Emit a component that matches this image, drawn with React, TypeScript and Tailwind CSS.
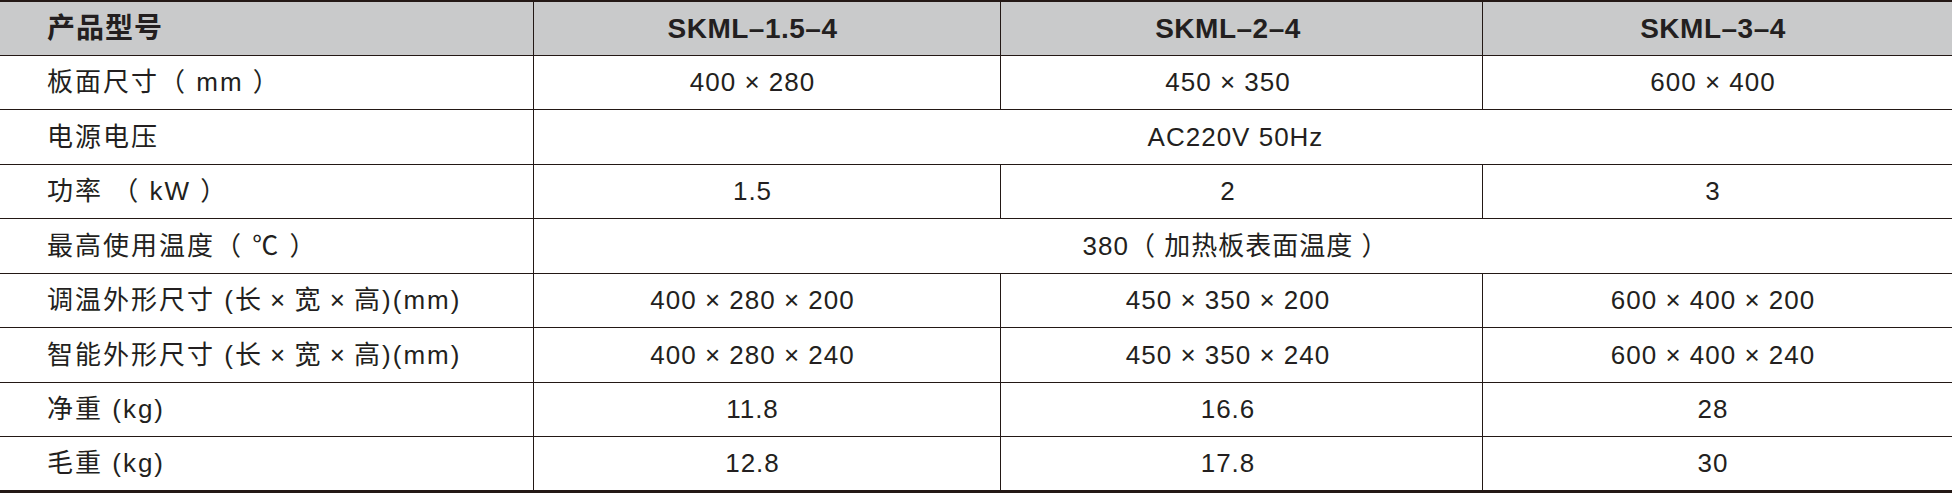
import React from 'react'

type Row = {
  label: string
  values?: string[]
  span?: string
}

const rows: Row[] = [
  { label: '板面尺寸（ mm ）', values: ['400 × 280', '450 × 350', '600 × 400'] },
  { label: '电源电压', span: 'AC220V 50Hz' },
  { label: '功率 （ kW ）', values: ['1.5', '2', '3'] },
  { label: '最高使用温度（ ℃ ）', span: '380（ 加热板表面温度 ）' },
  {
    label: '调温外形尺寸 (长\u2009×\u2009宽\u2009×\u2009高)(mm)',
    values: ['400 × 280 × 200', '450 × 350 × 200', '600 × 400 × 200'],
  },
  {
    label: '智能外形尺寸 (长\u2009×\u2009宽\u2009×\u2009高)(mm)',
    values: ['400 × 280 × 240', '450 × 350 × 240', '600 × 400 × 240'],
  },
  { label: '净重 (kg)', values: ['11.8', '16.6', '28'] },
  { label: '毛重 (kg)', values: ['12.8', '17.8', '30'] },
]

const models = ['SKML–1.5–4', 'SKML–2–4', 'SKML–3–4']

// pr per column so the text sits where the print put it
const colPad = ['pr-[29px]', 'pr-[27px]', 'pr-[9px]']

export default function App() {
  return (
    <div
      className="w-[1952px] h-[493px] bg-white text-[#231f20] overflow-hidden"
      style={{ fontFamily: '"Liberation Sans", "Noto Sans CJK SC", sans-serif' }}
    >
      <div className="border-t-2 border-b-[3px] border-[#231815] grid grid-cols-[534px_467px_482px_1fr]">
        {/* header */}
        <div className="h-[54px] border-b border-r border-[#231815] bg-[#c9cacb] flex items-center pl-[47px] text-[28px] font-bold tracking-[1px]">
          产品型号
        </div>
        {models.map((m, i) => (
          <div
            key={m}
            className={`h-[54px] border-b border-[#231815] bg-[#c9cacb] flex items-center justify-center text-[28px] font-bold tracking-[0.5px] ${
              i < 2 ? 'border-r' : ''
            } ${colPad[i]}`}
          >
            {m}
          </div>
        ))}

        {rows.map((r, idx) => {
          const last = idx === rows.length - 1
          const h = last ? 'h-[53px]' : idx % 2 === 0 ? 'h-[54px]' : 'h-[55px]'
          const bb = last ? '' : 'border-b'
          return (
            <React.Fragment key={r.label}>
              <div
                className={`${h} ${bb} border-r border-[#231815] flex items-center pl-[47px] text-[26px] tracking-[2px]`}
              >
                {r.label}
              </div>
              {r.span ? (
                <div
                  className={`${h} ${bb} col-span-3 border-[#231815] flex items-center justify-center text-[26px] tracking-[1px] pr-[15px]`}
                >
                  {r.span}
                </div>
              ) : (
                r.values!.map((v, i) => (
                  <div
                    key={i}
                    className={`${h} ${bb} border-[#231815] flex items-center justify-center text-[26px] tracking-[1px] ${
                      i < 2 ? 'border-r' : ''
                    } ${colPad[i]}`}
                  >
                    {v}
                  </div>
                ))
              )}
            </React.Fragment>
          )
        })}
      </div>
    </div>
  )
}
